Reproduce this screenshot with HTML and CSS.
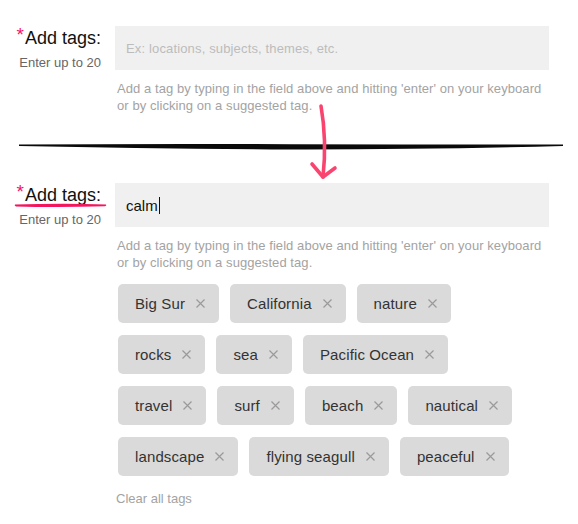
FILE: index.html
```html
<!DOCTYPE html>
<html>
<head>
<meta charset="utf-8">
<link rel="stylesheet" href="styles.css">
</head>
<body>
<div class="page">
  <div class="section">
    <div class="label-col">
      <div class="label"><span class="req">*</span>Add tags:</div>
      <div class="sub">Enter up to 20</div>
    </div>
    <div class="field-col">
      <div class="input"><span class="placeholder">Ex: locations, subjects, themes, etc.</span></div>
      <p class="help">Add a tag by typing in the field above and hitting 'enter' on your keyboard<br>or by clicking on a suggested tag.</p>
    </div>
  </div>

  <svg class="divider" width="578" height="10" viewBox="0 142 578 10">
    <path d="M19 144.6 Q 150 143.6 290 144.2 Q 430 144.4 563 144.6 L 563 146 Q 430 149.6 290 149.4 Q 150 148.6 19 146 Z" fill="#0a0a0a"/>
  </svg>

  <div class="section">
    <div class="label-col">
      <div class="label"><span class="req">*</span>Add tags:</div>
      <div class="sub">Enter up to 20</div>
    </div>
    <div class="field-col">
      <div class="input"><span class="value">calm</span><span class="caret"></span></div>
      <p class="help">Add a tag by typing in the field above and hitting 'enter' on your keyboard<br>or by clicking on a suggested tag.</p>
      <div class="tags">
        <span class="tag">Big Sur<svg class="x" viewBox="0 0 9 9"><path d="M0.5 0.5L8.5 8.5M8.5 0.5L0.5 8.5"/></svg></span>
        <span class="tag">California<svg class="x" viewBox="0 0 9 9"><path d="M0.5 0.5L8.5 8.5M8.5 0.5L0.5 8.5"/></svg></span>
        <span class="tag">nature<svg class="x" viewBox="0 0 9 9"><path d="M0.5 0.5L8.5 8.5M8.5 0.5L0.5 8.5"/></svg></span>
        <span class="tag">rocks<svg class="x" viewBox="0 0 9 9"><path d="M0.5 0.5L8.5 8.5M8.5 0.5L0.5 8.5"/></svg></span>
        <span class="tag">sea<svg class="x" viewBox="0 0 9 9"><path d="M0.5 0.5L8.5 8.5M8.5 0.5L0.5 8.5"/></svg></span>
        <span class="tag">Pacific Ocean<svg class="x" viewBox="0 0 9 9"><path d="M0.5 0.5L8.5 8.5M8.5 0.5L0.5 8.5"/></svg></span>
        <span class="tag">travel<svg class="x" viewBox="0 0 9 9"><path d="M0.5 0.5L8.5 8.5M8.5 0.5L0.5 8.5"/></svg></span>
        <span class="tag">surf<svg class="x" viewBox="0 0 9 9"><path d="M0.5 0.5L8.5 8.5M8.5 0.5L0.5 8.5"/></svg></span>
        <span class="tag">beach<svg class="x" viewBox="0 0 9 9"><path d="M0.5 0.5L8.5 8.5M8.5 0.5L0.5 8.5"/></svg></span>
        <span class="tag">nautical<svg class="x" viewBox="0 0 9 9"><path d="M0.5 0.5L8.5 8.5M8.5 0.5L0.5 8.5"/></svg></span>
        <span class="tag">landscape<svg class="x" viewBox="0 0 9 9"><path d="M0.5 0.5L8.5 8.5M8.5 0.5L0.5 8.5"/></svg></span>
        <span class="tag">flying seagull<svg class="x" viewBox="0 0 9 9"><path d="M0.5 0.5L8.5 8.5M8.5 0.5L0.5 8.5"/></svg></span>
        <span class="tag">peaceful<svg class="x" viewBox="0 0 9 9"><path d="M0.5 0.5L8.5 8.5M8.5 0.5L0.5 8.5"/></svg></span>
      </div>
      <div class="clear">Clear all tags</div>
    </div>
  </div>

  <svg class="underline" width="94" height="6" viewBox="0 0 94 6">
    <path d="M1 2.6 Q 45 1.2 92 2.4 Q 93 3.4 91 4.2 Q 45 5.6 2 4.4 Q 0 3.6 1 2.6 Z" fill="#f2165c"/>
  </svg>

  <svg class="arrow" width="40" height="80" viewBox="300 102 40 80">
    <path d="M321 106 Q 327 140 323 177" fill="none" stroke="#fa4470" stroke-width="3.6" stroke-linecap="round"/>
    <path d="M312 164 L 323 177 L 335 168" fill="none" stroke="#fa4470" stroke-width="3.6" stroke-linecap="round" stroke-linejoin="round"/>
  </svg>
</div>
</body>
</html>
```

FILE: styles.css
```css
html, body {
  margin: 0;
  padding: 0;
  background: #ffffff;
}

body {
  font-family: "Liberation Sans", Arial, Helvetica, sans-serif;
  color: #222;
}

.page {
  position: relative;
  width: 578px;
  height: 524px;
  padding-top: 26px;
  box-sizing: border-box;
}

.section {
  display: flex;
  gap: 14px;
}

.label-col {
  width: 101px;
  text-align: right;
  flex: none;
}

.label {
  font-size: 18px;
  line-height: 20px;
  padding-top: 2px;
  color: #111;
  white-space: nowrap;
}

.req {
  color: #f2136a;
  font-size: 19px;
  position: relative;
  top: -3px;
  margin-right: 1px;
}

.sub {
  font-size: 13px;
  line-height: 16px;
  color: #666;
  margin-top: 7px;
  white-space: nowrap;
}

.field-col {
  width: 434px;
  flex: none;
}

.input {
  height: 44px;
  background: #f0f0f0;
  display: flex;
  align-items: center;
  padding-left: 11px;
  box-sizing: border-box;
}

.placeholder {
  font-size: 13px;
  letter-spacing: 0.15px;
  color: #bcbcbc;
}

.value {
  font-size: 15px;
  color: #111;
}

.caret {
  display: inline-block;
  width: 1px;
  height: 17px;
  background: #111;
  margin-left: 1px;
}

.help {
  margin: 10px 0 0 2px;
  font-size: 13px;
  line-height: 17px;
  letter-spacing: 0.07px;
  color: #a3a3a3;
  white-space: nowrap;
}

.divider {
  display: block;
  margin: 28px 0 31px 0;
}

.tags {
  margin: 13px 0 0 3px;
  display: flex;
  flex-wrap: wrap;
  column-gap: 11px;
  row-gap: 12px;
  width: 420px;
}

.tag {
  height: 39px;
  box-sizing: border-box;
  background: #dadada;
  border-radius: 5px;
  padding: 0 14px 0 17px;
  display: inline-flex;
  align-items: center;
  gap: 11px;
  font-size: 15px;
  letter-spacing: 0.12px;
  color: #333;
  white-space: nowrap;
}

.x {
  width: 9px;
  height: 9px;
  flex: none;
}

.x path {
  stroke: #9a9a9a;
  stroke-width: 1.2;
  fill: none;
}

.clear {
  margin: 14px 0 0 1px;
  font-size: 13px;
  line-height: 17px;
  color: #a3a3a3;
}

.underline {
  position: absolute;
  left: 14px;
  top: 202px;
}

.arrow {
  position: absolute;
  left: 300px;
  top: 102px;
}
```
